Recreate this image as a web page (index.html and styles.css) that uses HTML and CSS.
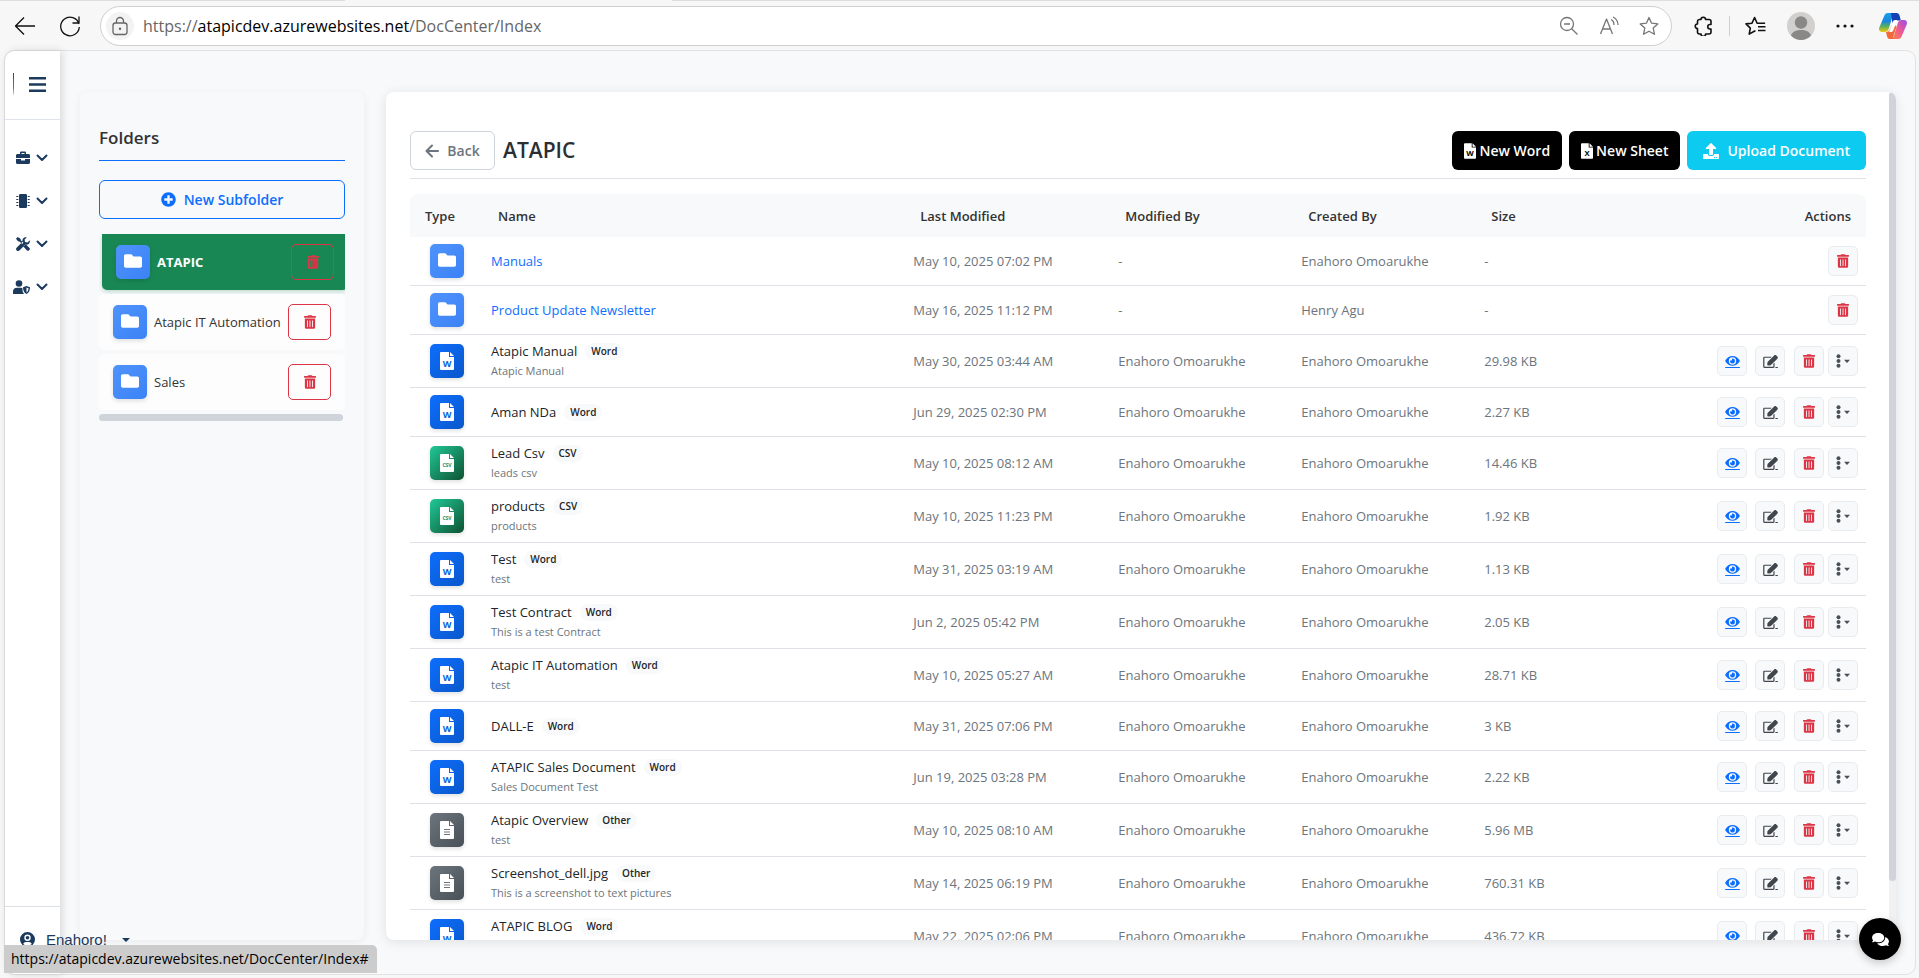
FILE: index.html
```html
<!DOCTYPE html>
<html lang="en">
<head>
  <meta charset="UTF-8">
  <meta name="viewport" content="width=device-width, initial-scale=1.0">
  <title>Document Center</title>
  <link rel="stylesheet" href="styles.css">
</head>
<body>

  <!-- Icon sprite -->
  <svg class="sprite" aria-hidden="true">
    <symbol id="trash" viewBox="0 0 448 512"><path d="M32 464a48 48 0 0 0 48 48h288a48 48 0 0 0 48-48V128H32zm272-256a16 16 0 0 1 32 0v224a16 16 0 0 1-32 0zm-96 0a16 16 0 0 1 32 0v224a16 16 0 0 1-32 0zm-96 0a16 16 0 0 1 32 0v224a16 16 0 0 1-32 0zM432 32H312l-9.400-18.700A24 24 0 0 0 281.100 0H166.800a23.720 23.720 0 0 0-21.400 13.300L136 32H16A16 16 0 0 0 0 48v32a16 16 0 0 0 16 16h416a16 16 0 0 0 16-16V48a16 16 0 0 0-16-16z"/></symbol>
    <symbol id="folder" viewBox="0 0 512 512"><path d="M464 128H272l-64-64H48C21.490 64 0 85.490 0 112v288c0 26.510 21.490 48 48 48h416c26.510 0 48-21.490 48-48V176c0-26.510-21.490-48-48-48z"/></symbol>
    <symbol id="eye" viewBox="0 0 576 512"><path d="M572.520 221.400C518.290 115.590 410.930 44 288 44S57.680 115.640 3.480 221.410a32.350 32.350 0 0 0 0 29.190C57.710 356.410 165.070 428 288 428s230.320-71.640 284.520-177.410a32.350 32.350 0 0 0 0-29.190zM288 380a144 144 0 1 1 144-144 143.930 143.930 0 0 1-144 144zm0-240a95.310 95.310 0 0 0-25.310 3.790 47.850 47.850 0 0 1-66.900 66.900A95.780 95.780 0 1 0 288 140z"/><path d="M0 472h576v40H0z"/></symbol>
    <symbol id="edit" viewBox="0 0 576 512"><path d="M402.300 344.900l32-32c5-5 13.700-1.500 13.700 5.700V464c0 26.500-21.500 48-48 48H48c-26.500 0-48-21.500-48-48V112c0-26.500 21.500-48 48-48h273.500c7.100 0 10.700 8.600 5.700 13.700l-32 32c-1.500 1.500-3.500 2.300-5.700 2.300H48v352h352V350.500c0-2.100.8-4.100 2.300-5.600zm156.600-201.800L296.300 405.700l-90.400 10c-26.200 2.900-48.500-19.200-45.600-45.600l10-90.400L432.900 17.100c22.900-22.900 59.900-22.900 82.700 0l43.200 43.200c22.900 22.900 22.900 60 .1 82.800z"/><path d="M480 472h96v40h-96z"/></symbol>
    <symbol id="more" viewBox="0 0 14 14"><circle cx="2.500" cy="2.300" r="2"/><circle cx="2.500" cy="7" r="2"/><circle cx="2.500" cy="11.700" r="2"/><path d="M8 5.800h6L11 9z"/></symbol>
    <symbol id="word" viewBox="0 0 14 18"><path d="M1 0h8v5h5v12a1 1 0 0 1-1 1H1a1 1 0 0 1-1-1V1a1 1 0 0 1 1-1z"/><path d="M10 0l4 4h-4z"/><text class="glyph" x="7" y="15">W</text></symbol>
    <symbol id="sheet" viewBox="0 0 14 18"><path d="M1 0h8v5h5v12a1 1 0 0 1-1 1H1a1 1 0 0 1-1-1V1a1 1 0 0 1 1-1z"/><path d="M10 0l4 4h-4z"/><text class="glyph" x="7" y="15">X</text></symbol>
    <symbol id="csv" viewBox="0 0 14 18"><path d="M1 0h8v5h5v12a1 1 0 0 1-1 1H1a1 1 0 0 1-1-1V1a1 1 0 0 1 1-1z"/><path d="M10 0l4 4h-4z"/><text class="glyph glyph-small" x="7" y="13">CSV</text></symbol>
    <symbol id="other" viewBox="0 0 14 18"><path d="M1 0h8v5h5v12a1 1 0 0 1-1 1H1a1 1 0 0 1-1-1V1a1 1 0 0 1 1-1z"/><path d="M10 0l4 4h-4z"/><path class="cut" d="M4 8.500h6M4 11h6M4 13.500h6"/></symbol>
    <symbol id="chevron" viewBox="0 0 12 8"><path class="line" d="M1.500 1.500L6 6l4.500-4.500"/></symbol>
  </svg>

  <!-- Browser toolbar -->
  <header class="toolbar">
    <button class="tool" aria-label="Back"><svg class="thin" width="22" height="20" viewBox="0 0 22 20"><path d="M21 10H1.500M10 1.500L1.500 10l8.500 8.500"/></svg></button>
    <button class="tool" aria-label="Refresh"><svg class="thin" width="22" height="22" viewBox="0 0 22 22"><path d="M20 9a9.300 9.300 0 1 0 .3 3M20 1.500V8h-6.500"/></svg></button>
    <div class="address">
      <span class="lock"><svg class="thin" width="18" height="20" viewBox="0 0 18 20"><rect x="2" y="7" width="14" height="11.500" rx="2.500"/><path d="M5.500 7V5a3.500 3.500 0 0 1 7 0v2"/><circle cx="9" cy="12.700" r=".6"/></svg></span>
      <div class="url" role="textbox" aria-label="Address" contenteditable="true" spellcheck="false">https://<b>atapicdev.azurewebsites.net</b>/DocCenter/Index</div>
      <button class="tool grey" aria-label="Zoom out"><svg class="thin" width="20" height="20" viewBox="0 0 20 20"><circle cx="8" cy="8" r="6.500"/><path d="M5 8h6M12.700 12.700L18.500 18.500"/></svg></button>
      <button class="tool grey" aria-label="Read aloud"><svg class="thin" width="20" height="20" viewBox="0 0 20 20"><path d="M1.500 18L7.500 3l6 15M3.500 13h8M12 3.500c2 1 3 3 3 5.500M14 1c3 1.500 5 4.500 5 8"/></svg></button>
      <button class="tool grey" aria-label="Add to favorites"><svg class="thin" width="20" height="20" viewBox="0 0 20 20"><path d="M10 1.500l2.600 5.700 6.200.7-4.600 4.200 1.300 6.200L10 15.200l-5.500 3.100 1.300-6.200L1.200 7.900l6.200-.7z"/></svg></button>
    </div>
    <div class="toolbar-right">
      <button class="tool" aria-label="Extensions"><svg class="thin bold" width="20" height="20" viewBox="0 0 20 20"><path d="M7 3.500a2.300 2.300 0 0 1 4.600 0H15a2 2 0 0 1 2 2v3h-1a2 2 0 0 0 0 4.500h1v3a2 2 0 0 1-2 2h-3.400a2.300 2.300 0 0 1-4.600 0H5.500a2 2 0 0 1-2-2v-3.500a2.200 2.200 0 0 1 0-4.500V5.500a2 2 0 0 1 2-2z"/></svg></button>
      <span class="split"></span>
      <button class="tool" aria-label="Favorites"><svg class="thin bold" width="21" height="20" viewBox="0 0 21 20"><path d="M10.500 15.200L9.700 15l-5.500 3.100 1.100-6L1 7.900l6-.7 2.600-5.700 2.500 5.700h8M13 10.700h7.500M13 14.500h7.500"/></svg></button>
      <button class="tool" aria-label="Profile"><svg width="28" height="28" viewBox="0 0 28 28"><circle cx="14" cy="14" r="14" fill="#d2d0ce"/><circle cx="14" cy="10.500" r="6.200" fill="#8a8886"/><path d="M4 23.500c1.500-4 5-5.500 10-5.500s8.500 1.500 10 5.500A14 14 0 0 1 14 28a14 14 0 0 1-10-4.500z" fill="#8a8886"/></svg></button>
      <button class="tool" aria-label="Settings and more"><svg width="18" height="4" viewBox="0 0 18 4"><circle cx="2" cy="2" r="1.600"/><circle cx="9" cy="2" r="1.600"/><circle cx="16" cy="2" r="1.600"/></svg></button>
      <button class="tool copilot" aria-label="Copilot"><svg width="28" height="26" viewBox="0 0 28 26">
        <defs>
          <linearGradient id="cool" x1="0" y1="0" x2="0" y2="1"><stop offset="0" stop-color="#1a9fe8"/><stop offset=".45" stop-color="#1b86e0"/><stop offset=".7" stop-color="#56b15c"/><stop offset="1" stop-color="#f2c811"/></linearGradient>
          <linearGradient id="warm" x1="1" y1="0" x2="0" y2="1"><stop offset="0" stop-color="#9a4bea"/><stop offset=".5" stop-color="#ee5a94"/><stop offset="1" stop-color="#fb8a3a"/></linearGradient>
        </defs>
        <path d="M5 3.500C5.800 1 7 0 9 0h8c-2 0-3 1.500-3.600 3.500L10 15c-.8 2.500-2 4-4.500 4H3c-2.500 0-3.500-2-2.700-4.500z" fill="url(#cool)"/>
        <path d="M12 0h5.500c1.800 0 2.700 1 3.200 3l1.100 4.500H17c-2 0-3 1-3.500 3z" fill="#1540b8"/>
        <path d="M23 22.500c-.8 2.500-2 3.500-4 3.500h-7.500c2 0 3-1.500 3.600-3.500L18.500 11c.8-2.500 2-4 4.500-4h2c2.500 0 3.500 2 2.700 4.500z" fill="url(#warm)"/>
        <path d="M16 26h-5.500c-1.300 0-2-1-2.400-2.500L7 19c2 0 3-.8 3.600-2.500l3-6 4 3-3 9c-.5 2-.6 3 1.400 3.500z" fill="#f4693a"/>
        <path d="M14 8.500c.5-1 1.200-1.500 2.500-1.500h1.700l-4 10.500c-.5 1-1.200 1.500-2.500 1.500H10z" fill="#fff"/>
      </svg></button>
    </div>
  </header>

  <div class="page">

    <!-- Left rail -->
    <nav class="rail">
      <div class="rail-top">
        <span class="mark"></span>
        <button class="menu-btn" aria-label="Toggle menu"><svg width="17" height="15" viewBox="0 0 17 15"><path d="M0 0h17v2.400H0zM0 6.300h17v2.400H0zM0 12.600h17V15H0z"/></svg></button>
      </div>
      <div class="rail-links">
        <a href="#" aria-label="Business"><svg width="14" height="14" viewBox="0 0 14 14"><path d="M4 3V1.800C4 1 4.600.5 5.300.5h3.400c.7 0 1.300.5 1.300 1.300V3h2.500c.8 0 1.500.7 1.500 1.500V7H0V4.500C0 3.700.7 3 1.500 3zm1.500 0h3V2h-3zM0 8h5v1.500h4V8h5v3.500c0 .8-.7 1.500-1.500 1.500h-11C.7 13 0 12.300 0 11.500z"/></svg><svg width="12" height="8"><use href="#chevron"/></svg></a>
        <a href="#" aria-label="Devices"><svg width="14" height="14" viewBox="0 0 14 14"><rect x="3" width="8" height="14" rx="1.200"/><path d="M.3 2h2v1h-2zm0 3h2v1h-2zm0 3h2v1h-2zm0 3h2v1h-2zM11.700 2h2v1h-2zm0 3h2v1h-2zm0 3h2v1h-2zm0 3h2v1h-2z"/></svg><svg width="12" height="8"><use href="#chevron"/></svg></a>
        <a href="#" aria-label="Tools"><svg width="14" height="14" viewBox="0 0 14 14"><path d="M1.700 0L0 1.700l2 2.600 1.500.2 2.600 2.600 1.300-1.300L4.800 3.200 4.500 1.800zM8.300 8l-1 1.500L11 13.400c.6.600 1.300.6 1.900 0l.6-.6c.6-.6.600-1.300 0-1.900L10 7.500zM13.800 3.300c.5 1.800-.6 3.800-2.400 4.300-.7.200-1.300.1-2 0l-6 5.900c-.8.700-2 .7-2.800 0-.7-.8-.7-2 0-2.700l5.900-6C6 3 6.800 1 8.500.4c.8-.3 1.600-.3 2.300 0L8.600 2.600l.4 2.400 2.500.4z"/></svg><svg width="12" height="8"><use href="#chevron"/></svg></a>
        <a href="#" aria-label="Administration"><svg width="17" height="14" viewBox="0 0 17 14"><circle cx="6" cy="3.500" r="3.300"/><path d="M0 14v-2.500C0 9.300 1.700 7.800 4 7.800h4l1.500.4V10c0 1.700.7 3 1.700 4z"/><path d="M13.500 6l3.500 1.300c0 3-.8 5.300-3.500 6.700-2.700-1.400-3.500-3.700-3.500-6.700zm0 1.500v5c1.300-.9 2-2.300 2-4.200z"/></svg><svg width="12" height="8"><use href="#chevron"/></svg></a>
      </div>
      <a href="#" class="user">
        <svg width="15" height="15" viewBox="0 0 15 15"><path fill-rule="evenodd" d="M7.500 0a7.500 7.500 0 1 1 0 15 7.500 7.500 0 0 1 0-15zm0 2.500a3.200 3.200 0 1 0 0 6.400 3.200 3.200 0 0 0 0-6.400zM3.200 12a6 6 0 0 0 8.600 0c-.5-1.300-1.500-2-2.800-2H6c-1.300 0-2.300.7-2.800 2z"/><circle cx="7.500" cy="5.700" r="1.800"/></svg>
        <span>Enahoro!</span>
        <svg width="8" height="4" viewBox="0 0 8 4"><path d="M0 0h8L4 4z"/></svg>
      </a>
    </nav>

    <main class="content">

      <!-- Folder tree -->
      <aside class="folders">
        <h2>Folders</h2>
        <button class="btn btn-outline"><svg width="15" height="15" viewBox="0 0 512 512"><path d="M256 8C119 8 8 119 8 256s111 248 248 248 248-111 248-248S393 8 256 8zm144 276c0 6.600-5.400 12-12 12h-92v92c0 6.600-5.400 12-12 12h-56c-6.600 0-12-5.400-12-12v-92h-92c-6.600 0-12-5.400-12-12v-56c0-6.600 5.400-12 12-12h92v-92c0-6.600 5.400-12 12-12h56c6.600 0 12 5.400 12 12v92h92c6.600 0 12 5.400 12 12v56z"/></svg>New Subfolder</button>
        <ul class="tree">
          <li class="active"><span class="tile folder"><svg width="18" height="18"><use href="#folder"/></svg></span><a href="#">ATAPIC</a><button class="btn-trash" aria-label="Delete ATAPIC"><svg width="12" height="14"><use href="#trash"/></svg></button></li>
          <li><span class="tile folder"><svg width="18" height="18"><use href="#folder"/></svg></span><a href="#">Atapic IT Automation</a><button class="btn-trash" aria-label="Delete Atapic IT Automation"><svg width="12" height="14"><use href="#trash"/></svg></button></li>
          <li><span class="tile folder"><svg width="18" height="18"><use href="#folder"/></svg></span><a href="#">Sales</a><button class="btn-trash" aria-label="Delete Sales"><svg width="12" height="14"><use href="#trash"/></svg></button></li>
        </ul>
        <div class="hscroll"></div>
      </aside>

      <!-- Documents -->
      <section class="docs">
        <div class="docs-head">
          <button class="btn btn-back"><svg width="14" height="14" viewBox="0 0 14 14"><path class="line" d="M13 7H2M7 1.500L1.500 7 7 12.500"/></svg>Back</button>
          <h1>ATAPIC</h1>
          <div class="docs-actions">
            <button class="btn btn-dark"><svg width="12" height="16"><use href="#word"/></svg>New Word</button>
            <button class="btn btn-dark"><svg width="12" height="16"><use href="#sheet"/></svg>New Sheet</button>
            <button class="btn btn-info"><svg width="16" height="16" viewBox="0 0 512 512"><path d="M296 384h-80c-13.300 0-24-10.700-24-24V192h-87.700c-17.800 0-26.700-21.500-14.100-34.100L242.300 5.700c7.500-7.500 19.800-7.500 27.300 0l152.200 152.200c12.600 12.600 3.700 34.100-14.100 34.100H320v168c0 13.300-10.700 24-24 24zm216-8v112c0 13.300-10.700 24-24 24H24c-13.300 0-24-10.700-24-24V376c0-13.300 10.700-24 24-24h136v8c0 30.900 25.100 56 56 56h80c30.900 0 56-25.100 56-56v-8h136c13.300 0 24 10.700 24 24zm-124 88c0-11-9-20-20-20s-20 9-20 20 9 20 20 20 20-9 20-20zm64 0c0-11-9-20-20-20s-20 9-20 20 9 20 20 20 20-9 20-20z"/></svg>Upload Document</button>
          </div>
        </div>

        <table>
          <colgroup>
            <col class="c-type"><col class="c-name"><col class="c-date"><col class="c-by"><col class="c-by"><col class="c-size"><col>
          </colgroup>
          <thead>
            <tr><th>Type</th><th>Name</th><th>Last Modified</th><th>Modified By</th><th>Created By</th><th>Size</th><th>Actions</th></tr>
          </thead>
          <tbody>
            <tr class="short">
              <td><span class="tile folder"><svg width="18" height="18"><use href="#folder"/></svg></span></td>
              <td><a href="#">Manuals</a></td>
              <td>May 10, 2025 07:02 PM</td><td>-</td><td>Enahoro Omoarukhe</td><td>-</td>
              <td><div class="acts"><button class="act del" aria-label="Delete"><svg width="12" height="14"><use href="#trash"/></svg></button></div></td>
            </tr>
            <tr class="short">
              <td><span class="tile folder"><svg width="18" height="18"><use href="#folder"/></svg></span></td>
              <td><a href="#">Product Update Newsletter</a></td>
              <td>May 16, 2025 11:12 PM</td><td>-</td><td>Henry Agu</td><td>-</td>
              <td><div class="acts"><button class="act del" aria-label="Delete"><svg width="12" height="14"><use href="#trash"/></svg></button></div></td>
            </tr>
            <tr>
              <td><span class="tile word"><svg width="14" height="18"><use href="#word"/></svg></span></td>
              <td><div class="name">Atapic Manual<span class="badge">Word</span></div><small>Atapic Manual</small></td>
              <td>May 30, 2025 03:44 AM</td><td>Enahoro Omoarukhe</td><td>Enahoro Omoarukhe</td><td>29.98 KB</td>
              <td><div class="acts"><a href="#" class="act view" aria-label="View"><svg width="15" height="13"><use href="#eye"/></svg></a><a href="#" class="act edit" aria-label="Edit"><svg width="15" height="13"><use href="#edit"/></svg></a><button class="act del" aria-label="Delete"><svg width="12" height="14"><use href="#trash"/></svg></button><button class="act" aria-label="More"><svg width="14" height="14"><use href="#more"/></svg></button></div></td>
            </tr>
            <tr class="short">
              <td><span class="tile word"><svg width="14" height="18"><use href="#word"/></svg></span></td>
              <td><div class="name">Aman NDa<span class="badge">Word</span></div></td>
              <td>Jun 29, 2025 02:30 PM</td><td>Enahoro Omoarukhe</td><td>Enahoro Omoarukhe</td><td>2.27 KB</td>
              <td><div class="acts"><a href="#" class="act view" aria-label="View"><svg width="15" height="13"><use href="#eye"/></svg></a><a href="#" class="act edit" aria-label="Edit"><svg width="15" height="13"><use href="#edit"/></svg></a><button class="act del" aria-label="Delete"><svg width="12" height="14"><use href="#trash"/></svg></button><button class="act" aria-label="More"><svg width="14" height="14"><use href="#more"/></svg></button></div></td>
            </tr>
            <tr>
              <td><span class="tile csv"><svg width="14" height="18"><use href="#csv"/></svg></span></td>
              <td><div class="name">Lead Csv<span class="badge">CSV</span></div><small>leads csv</small></td>
              <td>May 10, 2025 08:12 AM</td><td>Enahoro Omoarukhe</td><td>Enahoro Omoarukhe</td><td>14.46 KB</td>
              <td><div class="acts"><a href="#" class="act view" aria-label="View"><svg width="15" height="13"><use href="#eye"/></svg></a><a href="#" class="act edit" aria-label="Edit"><svg width="15" height="13"><use href="#edit"/></svg></a><button class="act del" aria-label="Delete"><svg width="12" height="14"><use href="#trash"/></svg></button><button class="act" aria-label="More"><svg width="14" height="14"><use href="#more"/></svg></button></div></td>
            </tr>
            <tr>
              <td><span class="tile csv"><svg width="14" height="18"><use href="#csv"/></svg></span></td>
              <td><div class="name">products<span class="badge">CSV</span></div><small>products</small></td>
              <td>May 10, 2025 11:23 PM</td><td>Enahoro Omoarukhe</td><td>Enahoro Omoarukhe</td><td>1.92 KB</td>
              <td><div class="acts"><a href="#" class="act view" aria-label="View"><svg width="15" height="13"><use href="#eye"/></svg></a><a href="#" class="act edit" aria-label="Edit"><svg width="15" height="13"><use href="#edit"/></svg></a><button class="act del" aria-label="Delete"><svg width="12" height="14"><use href="#trash"/></svg></button><button class="act" aria-label="More"><svg width="14" height="14"><use href="#more"/></svg></button></div></td>
            </tr>
            <tr>
              <td><span class="tile word"><svg width="14" height="18"><use href="#word"/></svg></span></td>
              <td><div class="name">Test<span class="badge">Word</span></div><small>test</small></td>
              <td>May 31, 2025 03:19 AM</td><td>Enahoro Omoarukhe</td><td>Enahoro Omoarukhe</td><td>1.13 KB</td>
              <td><div class="acts"><a href="#" class="act view" aria-label="View"><svg width="15" height="13"><use href="#eye"/></svg></a><a href="#" class="act edit" aria-label="Edit"><svg width="15" height="13"><use href="#edit"/></svg></a><button class="act del" aria-label="Delete"><svg width="12" height="14"><use href="#trash"/></svg></button><button class="act" aria-label="More"><svg width="14" height="14"><use href="#more"/></svg></button></div></td>
            </tr>
            <tr>
              <td><span class="tile word"><svg width="14" height="18"><use href="#word"/></svg></span></td>
              <td><div class="name">Test Contract<span class="badge">Word</span></div><small>This is a test Contract</small></td>
              <td>Jun 2, 2025 05:42 PM</td><td>Enahoro Omoarukhe</td><td>Enahoro Omoarukhe</td><td>2.05 KB</td>
              <td><div class="acts"><a href="#" class="act view" aria-label="View"><svg width="15" height="13"><use href="#eye"/></svg></a><a href="#" class="act edit" aria-label="Edit"><svg width="15" height="13"><use href="#edit"/></svg></a><button class="act del" aria-label="Delete"><svg width="12" height="14"><use href="#trash"/></svg></button><button class="act" aria-label="More"><svg width="14" height="14"><use href="#more"/></svg></button></div></td>
            </tr>
            <tr>
              <td><span class="tile word"><svg width="14" height="18"><use href="#word"/></svg></span></td>
              <td><div class="name">Atapic IT Automation<span class="badge">Word</span></div><small>test</small></td>
              <td>May 10, 2025 05:27 AM</td><td>Enahoro Omoarukhe</td><td>Enahoro Omoarukhe</td><td>28.71 KB</td>
              <td><div class="acts"><a href="#" class="act view" aria-label="View"><svg width="15" height="13"><use href="#eye"/></svg></a><a href="#" class="act edit" aria-label="Edit"><svg width="15" height="13"><use href="#edit"/></svg></a><button class="act del" aria-label="Delete"><svg width="12" height="14"><use href="#trash"/></svg></button><button class="act" aria-label="More"><svg width="14" height="14"><use href="#more"/></svg></button></div></td>
            </tr>
            <tr class="short">
              <td><span class="tile word"><svg width="14" height="18"><use href="#word"/></svg></span></td>
              <td><div class="name">DALL-E<span class="badge">Word</span></div></td>
              <td>May 31, 2025 07:06 PM</td><td>Enahoro Omoarukhe</td><td>Enahoro Omoarukhe</td><td>3 KB</td>
              <td><div class="acts"><a href="#" class="act view" aria-label="View"><svg width="15" height="13"><use href="#eye"/></svg></a><a href="#" class="act edit" aria-label="Edit"><svg width="15" height="13"><use href="#edit"/></svg></a><button class="act del" aria-label="Delete"><svg width="12" height="14"><use href="#trash"/></svg></button><button class="act" aria-label="More"><svg width="14" height="14"><use href="#more"/></svg></button></div></td>
            </tr>
            <tr>
              <td><span class="tile word"><svg width="14" height="18"><use href="#word"/></svg></span></td>
              <td><div class="name">ATAPIC Sales Document<span class="badge">Word</span></div><small>Sales Document Test</small></td>
              <td>Jun 19, 2025 03:28 PM</td><td>Enahoro Omoarukhe</td><td>Enahoro Omoarukhe</td><td>2.22 KB</td>
              <td><div class="acts"><a href="#" class="act view" aria-label="View"><svg width="15" height="13"><use href="#eye"/></svg></a><a href="#" class="act edit" aria-label="Edit"><svg width="15" height="13"><use href="#edit"/></svg></a><button class="act del" aria-label="Delete"><svg width="12" height="14"><use href="#trash"/></svg></button><button class="act" aria-label="More"><svg width="14" height="14"><use href="#more"/></svg></button></div></td>
            </tr>
            <tr>
              <td><span class="tile other"><svg width="14" height="18"><use href="#other"/></svg></span></td>
              <td><div class="name">Atapic Overview<span class="badge">Other</span></div><small>test</small></td>
              <td>May 10, 2025 08:10 AM</td><td>Enahoro Omoarukhe</td><td>Enahoro Omoarukhe</td><td>5.96 MB</td>
              <td><div class="acts"><a href="#" class="act view" aria-label="View"><svg width="15" height="13"><use href="#eye"/></svg></a><a href="#" class="act edit" aria-label="Edit"><svg width="15" height="13"><use href="#edit"/></svg></a><button class="act del" aria-label="Delete"><svg width="12" height="14"><use href="#trash"/></svg></button><button class="act" aria-label="More"><svg width="14" height="14"><use href="#more"/></svg></button></div></td>
            </tr>
            <tr>
              <td><span class="tile other"><svg width="14" height="18"><use href="#other"/></svg></span></td>
              <td><div class="name">Screenshot_dell.jpg<span class="badge">Other</span></div><small>This is a screenshot to text pictures</small></td>
              <td>May 14, 2025 06:19 PM</td><td>Enahoro Omoarukhe</td><td>Enahoro Omoarukhe</td><td>760.31 KB</td>
              <td><div class="acts"><a href="#" class="act view" aria-label="View"><svg width="15" height="13"><use href="#eye"/></svg></a><a href="#" class="act edit" aria-label="Edit"><svg width="15" height="13"><use href="#edit"/></svg></a><button class="act del" aria-label="Delete"><svg width="12" height="14"><use href="#trash"/></svg></button><button class="act" aria-label="More"><svg width="14" height="14"><use href="#more"/></svg></button></div></td>
            </tr>
            <tr>
              <td><span class="tile word"><svg width="14" height="18"><use href="#word"/></svg></span></td>
              <td><div class="name">ATAPIC BLOG<span class="badge">Word</span></div><small>&nbsp;</small></td>
              <td>May 22, 2025 02:06 PM</td><td>Enahoro Omoarukhe</td><td>Enahoro Omoarukhe</td><td>436.72 KB</td>
              <td><div class="acts"><a href="#" class="act view" aria-label="View"><svg width="15" height="13"><use href="#eye"/></svg></a><a href="#" class="act edit" aria-label="Edit"><svg width="15" height="13"><use href="#edit"/></svg></a><button class="act del" aria-label="Delete"><svg width="12" height="14"><use href="#trash"/></svg></button><button class="act" aria-label="More"><svg width="14" height="14"><use href="#more"/></svg></button></div></td>
            </tr>
          </tbody>
        </table>
        <div class="vscroll"></div>
      </section>
    </main>
  </div>

  <button class="chat" aria-label="Chat"><svg width="17" height="15" viewBox="0 0 576 512"><path d="M416 192c0-88.400-93.100-160-208-160S0 103.600 0 192c0 34.300 14.100 65.900 38 92-13.400 30.200-35.500 54.200-35.800 54.500-2.200 2.300-2.800 5.700-1.500 8.700S4.800 352 8 352c36.600 0 66.900-12.300 88.700-25 32.200 15.700 70.300 25 111.300 25 114.900 0 208-71.600 208-160zm122 220c23.900-26 38-57.700 38-92 0-66.900-53.500-124.200-129.300-148.100.9 6.600 1.300 13.300 1.300 20.100 0 105.900-107.700 192-240 192-10.800 0-21.300-.8-31.700-1.900C207.800 439.600 281.800 480 368 480c41 0 79.100-9.200 111.300-25 21.800 12.700 52.100 25 88.700 25 3.200 0 6.100-1.900 7.300-4.800 1.300-2.900.7-6.300-1.500-8.700-.3-.3-22.400-24.200-35.800-54.500z"/></svg></button>
  <div class="status">https://atapicdev.azurewebsites.net/DocCenter/Index#</div>
</body>
</html>
```

FILE: styles.css
```css
* {
  margin: 0;
  padding: 0;
  box-sizing: border-box;
}

body {
  display: flex;
  flex-direction: column;
  height: 100vh;
  overflow: hidden;
  background: #f7f7f7;
  color: #212529;
  font-family: "Segoe UI", "Open Sans", "Noto Sans", sans-serif;
  font-size: 13px;
}

a {
  color: #0d6efd;
  text-decoration: none;
}

button {
  font: inherit;
  color: inherit;
  background: none;
  border: 0;
  cursor: pointer;
}

svg {
  display: block;
  flex: none;
  fill: currentColor;
}

.sprite {
  display: none;
}

.line {
  fill: none;
  stroke: currentColor;
  stroke-width: 2;
  stroke-linecap: round;
  stroke-linejoin: round;
}

.thin {
  fill: none;
  stroke: currentColor;
  stroke-width: 1.3;
  stroke-linejoin: round;
}

.thin.bold {
  stroke-width: 1.6;
}

/* Letters cut into the file icons */
.glyph {
  fill: var(--cut, #000);
  font-family: "Open Sans", sans-serif;
  font-size: 9px;
  font-weight: 700;
  text-anchor: middle;
}

.glyph-small {
  font-size: 5px;
}

.cut {
  fill: none;
  stroke: var(--cut, #000);
}

/* Browser toolbar */
.toolbar {
  display: flex;
  align-items: center;
  flex: none;
  height: 51px;
  padding: 0 12px 0 14px;
  /* hairline under the tabs, open below the active one */
  background: linear-gradient(to right, #dedede 18%, transparent 18%, transparent 35%, #dedede 35%) top / 100% 1px no-repeat;
  color: #111;
}

.tool {
  display: flex;
  margin-right: 23px;
}

.tool.grey {
  color: #767676;
  margin: 0 0 0 20px;
}

.address {
  display: flex;
  align-items: center;
  flex: 1;
  height: 40px;
  padding: 0 12px 0 5px;
  background: #fff;
  border: 1px solid #cfcfcf;
  border-radius: 20px;
}

.toolbar .tool + .address {
  margin-left: -4px;
}

.lock {
  display: flex;
  align-items: center;
  justify-content: center;
  width: 28px;
  height: 28px;
  border-radius: 50%;
  background: #f3f3f3;
  color: #666;
}

.url {
  flex: 1;
  margin-left: 9px;
  color: #666;
  font-size: 16px;
}

.url b {
  color: #000;
  font-weight: 400;
}

.toolbar-right {
  display: flex;
  align-items: center;
  margin-left: 22px;
}

.toolbar-right .tool {
  margin: 0 21px 0 0;
}

.toolbar-right .copilot {
  margin: 0 0 0 4px;
}

.split {
  width: 1px;
  height: 20px;
  margin-right: 15px;
  margin-left: -6px;
  background: #cfcfcf;
}

/* Page frame */
.page {
  display: flex;
  flex: 1;
  min-height: 0;
  margin: -1px 3px 3px 4px;
  background: #f8f9fb;
  border: 1px solid #e2e2e2;
  border-radius: 10px;
}

.rail {
  display: flex;
  flex-direction: column;
  flex: none;
  width: 55px;
  background: #fff;
  border-radius: 10px 0 0 10px;
  box-shadow: 2px 0 8px rgba(0, 0, 0, 0.14);
  color: #1b3a5e;
}

.rail a {
  color: inherit;
}

.rail-top {
  display: flex;
  align-items: center;
  gap: 15px;
  height: 69px;
  padding: 0 8px 2px;
  border-bottom: 1px solid #dfe3ee;
}

.mark {
  width: 1px;
  height: 22px;
  background: linear-gradient(#444, #777 70%, #ddd);
}

.menu-btn {
  display: flex;
}

.rail-links {
  display: flex;
  flex-direction: column;
  flex: 1;
  padding-top: 16px;
}

.rail-links a {
  display: flex;
  align-items: center;
  justify-content: flex-end;
  gap: 6px;
  height: 43px;
  padding-right: 12px;
}

.user {
  position: relative;
  display: flex;
  align-items: center;
  gap: 11px;
  height: 68px;
  padding: 0 0 2px 15px;
  border-top: 1px solid #dcdfe3;
  font-family: "Liberation Sans", Arial, sans-serif;
  font-size: 15px;
}

.user svg:last-child {
  margin-left: 4px;
}

.content {
  display: flex;
  flex: 1;
  gap: 22px;
  min-width: 0;
  padding: 41px 19px 34px 20px;
}

/* Folder tree */
.folders {
  flex: none;
  width: 284px;
  padding: 34px 19px;
  border-radius: 8px;
  background: #f8f9fb;
  box-shadow: 0 2px 10px rgba(0, 0, 0, 0.06);
}

.folders h2 {
  height: 35px;
  margin-bottom: 19px;
  border-bottom: 1px solid #0d6efd;
  color: #333;
  font-size: 17px;
  font-weight: 600;
  line-height: 24px;
}

.btn {
  display: flex;
  align-items: center;
  justify-content: center;
  gap: 8px;
  height: 39px;
  border-radius: 6px;
  font-size: 14px;
  font-weight: 600;
}

.btn-outline {
  width: 100%;
  border: 1px solid #0d6efd;
  color: #0d6efd;
}

.tree {
  margin-top: 15px;
  list-style: none;
  overflow: hidden;
}

.tree li {
  display: flex;
  align-items: center;
  gap: 7px;
  height: 56px;
  margin-bottom: 4px;
  padding: 0 14px;
  background: #fdfdfe;
  border-radius: 5px;
}

.tree a {
  flex: 1;
  color: #333;
  white-space: nowrap;
}

.tree .active {
  margin-left: 3px;
  margin-right: -3px;
  background: #198754;
  border-radius: 0 0 5px 5px;
  box-shadow: 0 2px 4px rgba(25, 135, 84, 0.25);
}

.tree .active a {
  color: #fff;
  font-weight: 700;
}

.btn-trash {
  display: flex;
  align-items: center;
  justify-content: center;
  flex: none;
  width: 43px;
  height: 36px;
  border: 1px solid #dc3545;
  border-radius: 5px;
  color: #dc3545;
}

.hscroll {
  height: 7px;
  margin-right: 2px;
  border-radius: 4px;
  background: #ced4da;
}

/* Square type tiles */
.tile {
  display: flex;
  align-items: center;
  justify-content: center;
  flex: none;
  width: 34px;
  height: 34px;
  border-radius: 5px;
  box-shadow: 0 2px 4px rgba(0, 0, 0, 0.12);
  color: #fff;
}

.tile.folder {
  padding-bottom: 2px;
  background: linear-gradient(135deg, #4f93fb, #3b82f6);
}

.tile.word {
  --cut: #0b62e6;
  background: linear-gradient(135deg, #0d6efd, #0a58ca);
}

.tile.csv {
  --cut: #1a8f68;
  background: linear-gradient(135deg, #20c997, #0f5132);
}

.tile.other {
  --cut: #6c757d;
  background: linear-gradient(135deg, #6c757d, #495057);
}

/* Documents */
.docs {
  position: relative;
  flex: 1;
  min-width: 0;
  padding: 39px 30px 0 24px;
  overflow: hidden;
  border-radius: 8px;
  background: #fff;
  box-shadow: 0 2px 12px rgba(0, 0, 0, 0.1);
}

.docs-head {
  display: flex;
  align-items: flex-start;
  gap: 8px;
  height: 48px;
  margin-bottom: 15px;
  border-bottom: 1px solid #dee2e6;
}

.docs-head h1 {
  flex: 1;
  color: #2b2f33;
  font-size: 21px;
  font-weight: 600;
  line-height: 39px;
}

.docs-actions {
  display: flex;
  gap: 7px;
}

.btn-back {
  width: 85px;
  border: 1px solid #ced4da;
  color: #6c757d;
}

.btn-dark {
  gap: 3px;
  padding: 0 12px;
  background: #000;
  color: #fff;
}

.btn-info {
  padding: 0 16px;
  background: #0dcaf0;
  color: #fff;
}

table {
  width: 100%;
  table-layout: fixed;
  border-collapse: separate;
  border-spacing: 0;
}

.c-type { width: 73px; }
.c-name { width: 29%; }
.c-date { width: 205px; }
.c-by { width: 183px; }
.c-size { width: 10%; }

th {
  height: 43px;
  padding: 0 15px;
  background: #f8f9fa;
  color: #333;
  font-weight: 600;
  text-align: left;
}

th:first-child {
  border-radius: 8px 0 0 0;
}

th:last-child {
  border-radius: 0 8px 0 0;
  text-align: right;
}

td {
  height: 53px;
  padding: 0 8px;
  border-bottom: 1px solid #dee2e6;
  color: #6c757d;
  white-space: nowrap;
}

.short td {
  height: 49px;
}

td .tile {
  margin: 0 auto;
}

.name {
  display: flex;
  align-items: center;
  gap: 8px;
  color: #212529;
  line-height: 19px;
}

.badge {
  padding: 0 6px;
  border-radius: 9px;
  background: #f8f9fa;
  font-size: 10px;
  font-weight: 600;
  line-height: 17px;
}

small {
  display: block;
  font-size: 11px;
  line-height: 19px;
}

/* Row buttons */
.acts {
  display: flex;
  justify-content: flex-end;
  gap: 4px;
}

.act {
  display: flex;
  align-items: center;
  justify-content: center;
  width: 30px;
  height: 30px;
  border: 1px solid #e9ecef;
  border-radius: 5px;
  background: #f8f9fa;
  color: #495057;
}

.view {
  margin-right: 4px;
  color: #0d6efd;
}

.edit {
  margin-right: 5px;
  color: #3f464d;
}

.del {
  color: #dc3545;
}

.vscroll {
  position: absolute;
  top: 0;
  right: 0;
  width: 7px;
  height: 100%;
  border-radius: 4px;
  background: #f1f1f1;
}

.vscroll::before {
  content: '';
  display: block;
  height: 93%;
  border-radius: 4px;
  background: #ced4da;
}

/* Overlays */
.chat {
  position: fixed;
  right: 18px;
  bottom: 18px;
  display: flex;
  align-items: center;
  justify-content: center;
  width: 42px;
  height: 42px;
  border-radius: 50%;
  background: #000;
  box-shadow: 0 3px 8px rgba(0, 0, 0, 0.2);
  color: #fff;
}

.status {
  position: fixed;
  left: 4px;
  bottom: 5px;
  padding: 0 8px 0 7px;
  border-radius: 0 5px 0 0;
  background: #ccc;
  color: #000;
  font-size: 14px;
  line-height: 28px;
}
```
